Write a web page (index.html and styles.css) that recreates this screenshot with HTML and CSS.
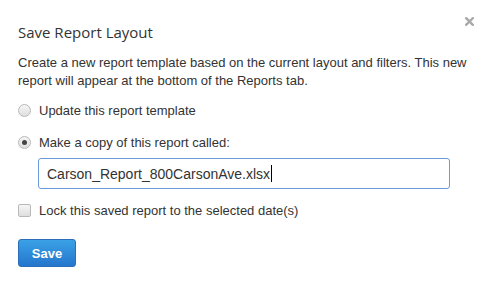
FILE: index.html
```html
<!DOCTYPE html>
<html lang="en">
<head>
    <meta charset="UTF-8">
    <title>Save Report Layout</title>
    <link rel="stylesheet" href="styles.css">
</head>
<body>
    <div class="modal">
        <div class="modal-header">
            <h4 class="modal-title">Save Report Layout</h4>
            <svg class="close" width="9" height="9" viewBox="0 0 9 9">
                <path d="M1.2 1.2 L7.8 7.8 M7.8 1.2 L1.2 7.8" stroke="#aaa" stroke-width="2.4" stroke-linecap="square"/>
            </svg>
        </div>
        <p class="intro">Create a new report template based on the current layout and filters. This new report will appear at the bottom of the Reports tab.</p>
        <label class="option first">
            <span class="radio"></span>
            Update this report template
        </label>
        <label class="option">
            <span class="radio checked"></span>
            Make a copy of this report called:
        </label>
        <div class="name-field">Carson_Report_800CarsonAve.xlsx<span class="caret"></span></div>
        <label class="option lock">
            <span class="checkbox"></span>
            Lock this saved report to the selected date(s)
        </label>
        <button class="save-button">Save</button>
    </div>
</body>
</html>
```

FILE: styles.css
```css
body {
    margin: 0;
    background: #fff;
    font-family: "Liberation Sans", Arial, sans-serif;
    color: #333;
}
.modal {
    padding: 14px 18px;
}
.modal-header {
    display: flex;
    justify-content: space-between;
    align-items: flex-start;
}
.modal-title {
    margin: 8px 0 0 0;
    font-family: "Open Sans", "Noto Sans", sans-serif;
    font-weight: normal;
    font-size: 15px;
    color: #333;
}
.close {
    margin: 3px 3px 0 0;
}
.intro {
    margin: 12px 0 0 0;
    font-size: 13px;
    line-height: 18px;
}
.option {
    display: flex;
    align-items: center;
    gap: 8px;
    font-size: 13px;
    height: 17px;
    margin-top: 15px;
}
.option.first {
    margin-top: 12px;
}
.radio {
    width: 11px;
    height: 11px;
    border: 1px solid #b8b8b8;
    border-radius: 50%;
    background: linear-gradient(#f6f6f6, #dedede);
    display: flex;
    align-items: center;
    justify-content: center;
}
.radio.checked::after {
    content: "";
    width: 5px;
    height: 5px;
    border-radius: 50%;
    background: #444;
}
.checkbox {
    width: 11px;
    height: 11px;
    border: 1px solid #b8b8b8;
    border-radius: 2px;
    background: linear-gradient(#f6f6f6, #dedede);
}
.name-field {
    margin: 7px 0 0 20px;
    width: 412px;
    height: 31px;
    box-sizing: border-box;
    border: 1px solid #6a9ad8;
    border-radius: 3px;
    padding: 0 8px;
    font-size: 14px;
    display: flex;
    align-items: center;
}
.caret {
    display: inline-block;
    width: 1px;
    height: 17px;
    background: #000;
    margin-left: 1px;
}
.lock {
    margin-top: 13px;
}
.save-button {
    display: block;
    margin-top: 20px;
    width: 58px;
    height: 28px;
    border: 1px solid #2a6fb8;
    border-radius: 3px;
    background: linear-gradient(#3aa1e6, #2576cc);
    color: #fff;
    font-family: "Liberation Sans", Arial, sans-serif;
    font-weight: bold;
    font-size: 13px;
    cursor: pointer;
}
```
